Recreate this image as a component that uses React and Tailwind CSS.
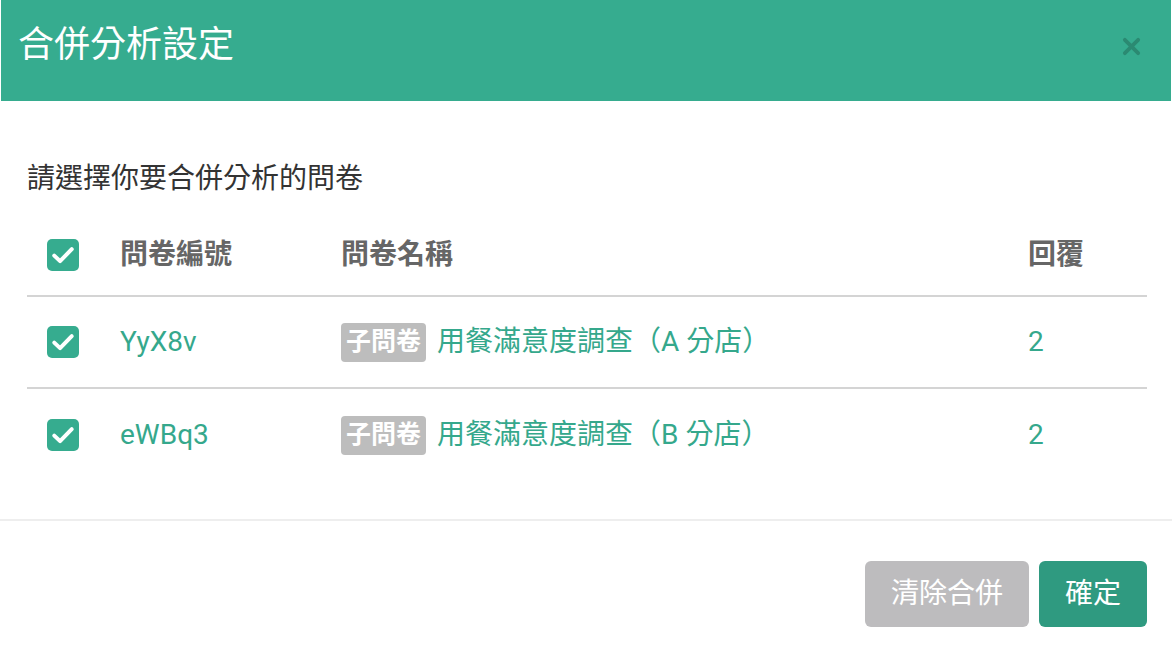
const rows = [
  { id: "YyX8v", name: "用餐滿意度調查（A 分店）", replies: 2 },
  { id: "eWBq3", name: "用餐滿意度調查（B 分店）", replies: 2 },
];

function Check() {
  return (
    <span className="flex h-8 w-8 items-center justify-center rounded-[5px] bg-[#36ac8f]">
      <svg viewBox="0 0 24 24" className="h-[28px] w-[28px]" fill="none" stroke="white" strokeWidth="3.4" strokeLinecap="round" strokeLinejoin="round">
        <path d="M4.5 12.5l5 4.8L19.5 7" />
      </svg>
    </span>
  );
}

export default function App() {
  return (
    <div className="h-[660px] w-[1172px] bg-white font-['Roboto','Noto_Sans_CJK_TC',sans-serif]">
      <div className="mx-px flex h-[101px] items-start justify-between bg-[#36ac8f] pl-[17px] pr-[30px] pt-[22px]">
        <h1 className="text-[36px] leading-[46px] font-normal text-white">合併分析設定</h1>
        <svg viewBox="0 0 20 20" className="mt-[15px] h-[19px] w-[19px]" stroke="#2b8a72" strokeWidth="4" strokeLinecap="round">
          <path d="M3 3l14 14M17 3L3 17" />
        </svg>
      </div>

      <div className="px-[27px] pt-[58px] pb-[38px]">
        <p className="text-[28px] leading-[40px] text-[#333]">請選擇你要合併分析的問卷</p>

        <div className="mt-4 mr-[-2px]">
          <div className="grid h-[82px] grid-cols-[93px_221px_1fr_119px] items-center border-b-2 border-[#d4d4d4] text-[28px] font-bold text-[#666]">
            <div className="pl-5"><Check /></div>
            <div>問卷編號</div>
            <div>問卷名稱</div>
            <div>回覆</div>
          </div>
          {rows.map((r, i) => (
            <div
              key={r.id}
              className={
                "grid h-[92px] grid-cols-[93px_221px_1fr_119px] items-center text-[28px] text-[#35a88c] " +
                (i < rows.length - 1 ? "border-b-2 border-[#d4d4d4]" : "")
              }
            >
              <div className="pl-5"><Check /></div>
              <div>{r.id}</div>
              <div className="flex items-center gap-[11px]">
                <span className="flex h-[39px] items-center rounded-[4px] bg-[#bdbdbd] px-[5px] text-[25px] font-bold text-white">子問卷</span>
                <span>{r.name}</span>
              </div>
              <div>{r.replies}</div>
            </div>
          ))}
        </div>
      </div>

      <div className="flex justify-end gap-[10px] border-t-2 border-[#eeeeee] pt-[40px] pr-[25px]">
        <button className="h-[66px] rounded-[6px] bg-[#bdbcbe] px-[26px] text-[28px] text-white">清除合併</button>
        <button className="h-[66px] rounded-[6px] bg-[#2f9a80] px-[26px] text-[28px] text-white">確定</button>
      </div>
    </div>
  );
}
